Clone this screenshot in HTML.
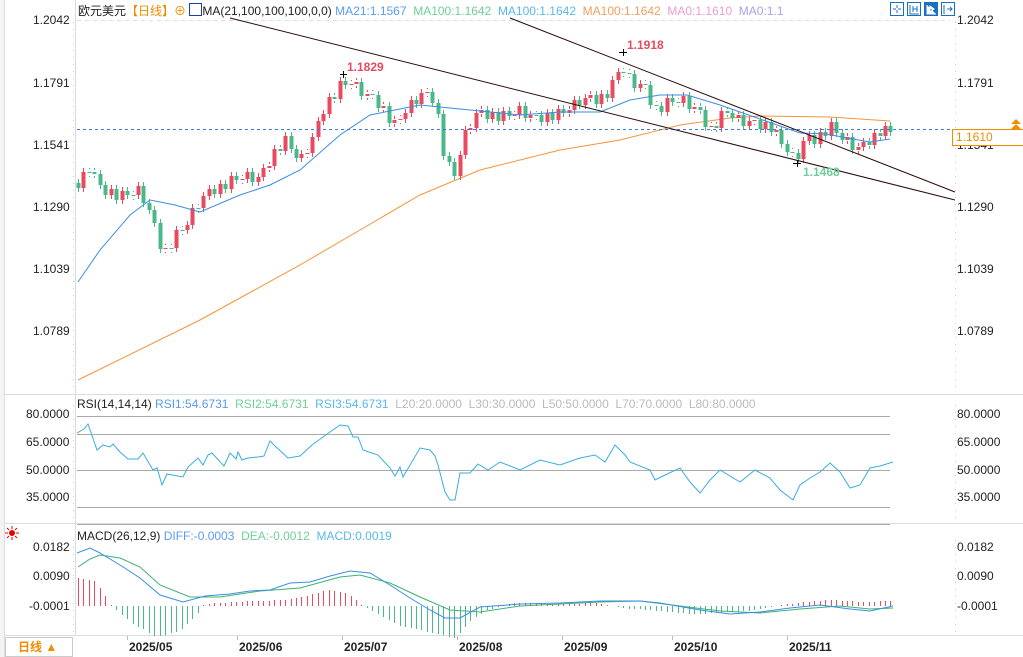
<!DOCTYPE html>
<html><head><meta charset="utf-8">
<style>
body{margin:0;width:1023px;height:657px;overflow:hidden;background:#fff;font-family:"Liberation Sans","Noto Sans CJK SC",sans-serif;position:relative}
.t{position:absolute;font-size:12px;white-space:nowrap;line-height:14px}
.ax{position:absolute;font-size:12px;color:#222;line-height:14px}
svg{position:absolute;left:0;top:0}
</style></head><body>
<svg width="1023" height="657" xmlns="http://www.w3.org/2000/svg" xmlns:xlink="http://www.w3.org/1999/xlink">
<defs>
<path id="rb" d="M83.5 172V188M111.5 189V195M122.5 191V200M138.5 186V195M165.5 248V249M176.5 230V248M187.5 225V230M192.5 208V225M203.5 196V208M209.5 189V196M220.5 184V194M231.5 176V189M242.5 179V180M247.5 172V179M258.5 177V182M263.5 168V177M269.5 166V168M274.5 149V166M285.5 136V151M301.5 154V158M307.5 153V154M312.5 137V153M318.5 121V137M323.5 114V121M329.5 97V114M340.5 81V99M351.5 84V85M356.5 82V84M367.5 94V96M383.5 106V108M394.5 120V123M400.5 119V120M405.5 113V119M411.5 100V113M421.5 93V104M427.5 92V93M460.5 155V176M465.5 130V155M470.5 128V130M476.5 113V128M481.5 110V113M492.5 112V119M503.5 111V121M514.5 115V116M519.5 106V115M530.5 115V118M547.5 113V122M558.5 109V120M569.5 110V113M574.5 100V110M585.5 98V105M590.5 95V98M601.5 94V104M612.5 80V98M618.5 72V80M640.5 84V88M667.5 98V112M683.5 96V103M694.5 107V109M711.5 126V127M721.5 111V128M738.5 115V118M749.5 121V126M754.5 120V121M765.5 122V129M776.5 130V132M803.5 141V159M809.5 135V141M820.5 132V144M831.5 122V136M847.5 137V140M858.5 147V150M863.5 142V147M874.5 133V145M885.5 126V136"/>
<path id="gb" d="M78.5 183V188M89.5 172V173M94.5 172V174M100.5 174V185M105.5 185V195M116.5 189V200M127.5 191V195M133.5 195V196M143.5 186V203M149.5 203V210M154.5 210V223M160.5 223V249M171.5 248V249M182.5 230V231M198.5 208V209M214.5 189V194M225.5 184V189M236.5 176V180M252.5 172V182M280.5 149V151M291.5 136V149M296.5 149V158M334.5 97V99M345.5 81V85M361.5 82V96M372.5 94V95M378.5 95V108M389.5 106V123M416.5 100V104M432.5 92V103M438.5 103V114M443.5 114V156M449.5 156V162M454.5 162V176M487.5 110V119M498.5 112V121M509.5 111V116M525.5 106V118M536.5 115V116M541.5 115V122M552.5 113V120M563.5 109V113M579.5 100V105M596.5 95V104M607.5 94V98M623.5 72V73M629.5 73V74M634.5 74V88M645.5 84V85M650.5 85V105M656.5 105V106M661.5 106V112M672.5 98V102M678.5 102V103M689.5 96V109M700.5 107V110M705.5 110V127M716.5 126V128M727.5 111V113M732.5 113V118M743.5 115V126M760.5 120V129M771.5 122V132M781.5 130V144M787.5 144V152M792.5 152V153M798.5 153V159M814.5 135V144M825.5 132V136M836.5 122V133M842.5 133V140M852.5 137V150M869.5 142V145M880.5 133V136M890.5 126V132"/>
</defs>
<rect x="0" y="0" width="4" height="657" fill="#f3f3f3"/>
<line x1="4.5" y1="0" x2="4.5" y2="657" stroke="#d8dde3"/>
<line x1="75.5" y1="0" x2="75.5" y2="635" stroke="#d8dde3"/>
<line x1="4" y1="394.5" x2="1023" y2="394.5" stroke="#d8dde3"/>
<line x1="4" y1="523.5" x2="1023" y2="523.5" stroke="#d8dde3"/>
<line x1="4" y1="635.5" x2="1023" y2="635.5" stroke="#d8dde3"/>
<line x1="77" y1="20.5" x2="950" y2="20.5" stroke="#ddd" stroke-dasharray="4,4"/>
<g stroke="#ccc" stroke-dasharray="1,6"><line x1="955.5" y1="22" x2="955.5" y2="390"/><line x1="955.5" y1="405" x2="955.5" y2="520"/><line x1="955.5" y1="540" x2="955.5" y2="632"/><line x1="73.5" y1="22" x2="73.5" y2="390"/><line x1="73.5" y1="405" x2="73.5" y2="520"/><line x1="73.5" y1="540" x2="73.5" y2="632"/></g>
<g stroke="#aaa"><line x1="77" y1="416.5" x2="890" y2="416.5"/><line x1="77" y1="434.5" x2="890" y2="434.5"/><line x1="77" y1="470.5" x2="890" y2="470.5"/><line x1="77" y1="507.5" x2="890" y2="507.5"/><line x1="77" y1="524.5" x2="890" y2="524.5"/></g>
<g stroke="#bbb"><line x1="127.5" y1="636" x2="127.5" y2="640"/><line x1="237.5" y1="636" x2="237.5" y2="640"/><line x1="342.5" y1="636" x2="342.5" y2="640"/><line x1="457.5" y1="636" x2="457.5" y2="640"/><line x1="562.5" y1="636" x2="562.5" y2="640"/><line x1="672.5" y1="636" x2="672.5" y2="640"/><line x1="787.5" y1="636" x2="787.5" y2="640"/></g>
<polyline fill="none" stroke="#f7943a" points="78,380 200,320 300,265 360,230 420,195 480,170 560,150 620,140 680,125 730,118 760,116 830,117 890,121"/>
<g stroke="#e84a5f" fill="none"><use xlink:href="#rb" href="#rb" stroke-width="1" transform="translate(0,-4)"/><use xlink:href="#rb" href="#rb" stroke-width="1" transform="translate(0,4)"/><use xlink:href="#rb" href="#rb" stroke-width="4"/></g>
<g stroke="#4ab88a" fill="none"><use xlink:href="#gb" href="#gb" stroke-width="1" transform="translate(0,-4)"/><use xlink:href="#gb" href="#gb" stroke-width="1" transform="translate(0,4)"/><use xlink:href="#gb" href="#gb" stroke-width="4"/></g>
<polyline fill="none" stroke="#3a8ee6" points="78,282 100,250 130,215 150,200 175,205 200,212 240,195 270,185 300,170 340,135 370,115 420,105 470,110 520,115 560,112 600,112 630,100 660,95 687,95 720,105 760,119 800,133 827,134 847,138 870,142 890,139"/>
<line x1="77" y1="129.5" x2="950" y2="129.5" stroke="#3a7bd5" stroke-dasharray="3,3"/>
<line x1="230" y1="18" x2="955" y2="200" stroke="#2a0a0a"/>
<line x1="510" y1="18" x2="955" y2="192" stroke="#2a0a0a"/>
<g stroke="#000"><line x1="340" y1="74.5" x2="347" y2="74.5"/><line x1="343.5" y1="71" x2="343.5" y2="78"/><line x1="619" y1="52.5" x2="627" y2="52.5"/><line x1="623.5" y1="49" x2="623.5" y2="56"/><line x1="793" y1="163.5" x2="801" y2="163.5"/><line x1="797.5" y1="160" x2="797.5" y2="167"/></g>
<polyline fill="none" stroke="#3aaee0" points="77,433 84,429 88,424 97,450 103,445 110,447 113,444 120,452 128,459 138,459 143,453 153,470 157,468 162,485 167,474 183,477 188,467 198,458 203,465 208,455 212,453 224,466 230,453 236,459 238,452 242,460 248,458 258,457 264,456 270,441 276,447 288,458 300,456 312,445 330,432 340,425 348,426 353,437 358,437 363,450 378,455 390,468 395,476 400,467 403,477 420,448 430,450 435,456 438,465 445,492 450,500 455,500 460,473 470,473 478,464 488,470 500,462 520,470 540,460 560,465 580,458 595,455 605,462 615,445 625,455 630,462 650,470 655,480 665,475 680,468 690,482 700,493 710,480 720,470 740,482 755,470 770,478 780,490 793,500 800,485 810,478 820,472 830,463 840,472 850,488 860,485 870,468 880,466 893,462"/>
<path stroke="#e84a5f" d="M78.5 606v-28M83.5 606v-27M89.5 606v-26M94.5 606v-25M100.5 606v-18M105.5 606v-10M111.5 606v-1M203.5 606v-1M209.5 606v-2M214.5 606v-3M220.5 606v-3M225.5 606v-3M231.5 606v-4M236.5 606v-4M242.5 606v-4M247.5 606v-5M252.5 606v-5M258.5 606v-5M263.5 606v-5M269.5 606v-5M274.5 606v-6M280.5 606v-6M285.5 606v-6M291.5 606v-7M296.5 606v-8M301.5 606v-9M307.5 606v-10M312.5 606v-12M318.5 606v-13M323.5 606v-15M329.5 606v-16M334.5 606v-15M340.5 606v-14M345.5 606v-13M351.5 606v-10M356.5 606v-6M361.5 606v-1M503.5 606v-1M509.5 606v-2M514.5 606v-3M519.5 606v-3M525.5 606v-3M530.5 606v-3M536.5 606v-3M541.5 606v-3M547.5 606v-2M552.5 606v-2M558.5 606v-2M563.5 606v-2M569.5 606v-2M574.5 606v-2M579.5 606v-2M585.5 606v-3M590.5 606v-3M596.5 606v-3M601.5 606v-2M607.5 606v-1M781.5 606v-1M787.5 606v-2M792.5 606v-2M798.5 606v-3M803.5 606v-4M809.5 606v-4M814.5 606v-5M820.5 606v-5M825.5 606v-6M831.5 606v-6M836.5 606v-6M842.5 606v-5M847.5 606v-5M852.5 606v-5M858.5 606v-4M863.5 606v-4M869.5 606v-4M874.5 606v-4M880.5 606v-5M885.5 606v-5M890.5 606v-5"/>
<path stroke="#4ab88a" d="M116.5 606v4M122.5 606v9M127.5 606v13M133.5 606v18M138.5 606v21M143.5 606v23M149.5 606v27M154.5 606v30M160.5 606v30M165.5 606v29M171.5 606v27M176.5 606v26M182.5 606v23M187.5 606v18M192.5 606v13M198.5 606v7M367.5 606v2M372.5 606v5M378.5 606v8M383.5 606v11M389.5 606v14M394.5 606v17M400.5 606v20M405.5 606v21M411.5 606v22M416.5 606v23M421.5 606v24M427.5 606v26M432.5 606v27M438.5 606v28M443.5 606v29M449.5 606v31M454.5 606v32M460.5 606v27M465.5 606v21M470.5 606v15M476.5 606v11M481.5 606v8M487.5 606v4M492.5 606v3M498.5 606v1M618.5 606v1M623.5 606v2M629.5 606v3M634.5 606v3M640.5 606v3M645.5 606v4M650.5 606v4M656.5 606v5M661.5 606v5M667.5 606v6M672.5 606v6M678.5 606v7M683.5 606v7M689.5 606v8M694.5 606v8M700.5 606v8M705.5 606v8M711.5 606v7M716.5 606v7M721.5 606v7M727.5 606v6M732.5 606v6M738.5 606v6M743.5 606v5M749.5 606v5M754.5 606v4M760.5 606v3M765.5 606v2M771.5 606v1"/>
<polyline fill="none" stroke="#3cb371" points="78,567 90,559 100,555 120,558 140,567 160,585 190,597 220,597 260,591 300,588 340,577 360,575 390,583 420,597 450,610 480,612 520,606 560,604 600,602 640,601 680,606 720,611 760,613 800,609 840,606 870,609 893,608"/>
<polyline fill="none" stroke="#3a8ee6" points="77,553 90,548 100,553 120,565 140,578 160,595 183,602 205,596 230,594 250,591 270,590 290,583 310,582 330,576 350,571 370,573 390,585 410,598 430,610 445,618 460,618 480,607 520,604 560,603 600,601 640,601 660,603 700,610 730,614 760,612 790,608 820,605 850,609 870,611 893,606"/>
<path d="M1011 124 L1016 119 L1021 124Z M1011 129 L1016 124 L1021 129Z" fill="#f08c00"/>
<g fill="#fff" stroke="#1a6fc0"><rect x="890.5" y="2.5" width="13" height="13"/><rect x="907.5" y="2.5" width="13" height="13"/><rect x="924.5" y="2.5" width="13" height="13" fill="#1a6fc0"/><rect x="941.5" y="2.5" width="13" height="13"/></g>
<g stroke="#1a6fc0" fill="none"><path d="M897 5v3M897 10v3M893 9h3M898 9h3"/><path d="M910 5v9h9M913 6v6M917 6v6M913 9h4"/><path d="M944 5v9M947 9h5M950 7l2 2-2 2"/></g>
<path d="M927 5v9h9M930 6l4 3-4 3z" stroke="#fff" fill="#fff"/>
<rect x="5.5" y="637.5" width="67" height="19" fill="#fff" stroke="#ccc"/>
<circle cx="12" cy="533" r="3" fill="#e00"/><g stroke="#e00"><path d="M12 526v3M12 537v3M5 533h3M16 533h3M7 528l2 2M15 536l2 2M7 538l2-2M15 530l2-2"/></g>
</svg>
<div class="t" style="left:78px;top:3px;color:#222">欧元美元<span style="color:#f08c00">【日线】⊕</span> <span style="display:inline-block;width:11px;height:11px;border:1px solid #1a3fa0;vertical-align:-1px"></span>MA(21,100,100,100,0,0) <span style="color:#5a9cf0">MA21:1.1567</span>&nbsp; <span style="color:#6fcf9a">MA100:1.1642</span>&nbsp; <span style="color:#5ab8f0">MA100:1.1642</span>&nbsp; <span style="color:#f0a060">MA100:1.1642</span>&nbsp; <span style="color:#e8a0d0">MA0:1.1610</span>&nbsp; <span style="color:#b0a0e8">MA0:1.1</span></div>
<div class="ax" style="left:33px;top:13px">1.2042</div>
<div class="ax" style="left:33px;top:76px">1.1791</div>
<div class="ax" style="left:33px;top:138px">1.1541</div>
<div class="ax" style="left:33px;top:200px">1.1290</div>
<div class="ax" style="left:33px;top:262px">1.1039</div>
<div class="ax" style="left:33px;top:324px">1.0789</div>
<div class="ax" style="left:957px;top:13px">1.2042</div>
<div class="ax" style="left:957px;top:76px">1.1791</div>
<div class="ax" style="left:957px;top:138px">1.1541</div>
<div class="ax" style="left:957px;top:200px">1.1290</div>
<div class="ax" style="left:957px;top:262px">1.1039</div>
<div class="ax" style="left:957px;top:324px">1.0789</div>
<div style="position:absolute;left:952px;top:129px;width:67px;height:15px;border:1px solid #f08c00;background:#fff;color:#f08c00;font-size:12px;line-height:15px;padding-left:3px;box-sizing:content-box">1.1610</div>
<div class="t" style="left:347px;top:60px;color:#e84a5f;font-weight:bold">1.1829</div>
<div class="t" style="left:627px;top:38px;color:#e84a5f;font-weight:bold">1.1918</div>
<div class="t" style="left:803px;top:165px;color:#6fcf9a;font-weight:bold">1.1468</div>
<div class="t" style="left:77px;top:397px;color:#222">RSI(14,14,14) <span style="color:#5a9cf0">RSI1:54.6731</span>&nbsp; <span style="color:#6fcf9a">RSI2:54.6731</span>&nbsp; <span style="color:#5ab8f0">RSI3:54.6731</span>&nbsp; <span style="color:#bbb">L20:20.0000&nbsp; L30:30.0000&nbsp; L50:50.0000&nbsp; L70:70.0000&nbsp; L80:80.0000</span></div>
<div class="ax" style="left:26px;top:407px">80.0000</div>
<div class="ax" style="left:26px;top:435px">65.0000</div>
<div class="ax" style="left:26px;top:463px">50.0000</div>
<div class="ax" style="left:26px;top:490px">35.0000</div>
<div class="ax" style="left:957px;top:407px">80.0000</div>
<div class="ax" style="left:957px;top:435px">65.0000</div>
<div class="ax" style="left:957px;top:463px">50.0000</div>
<div class="ax" style="left:957px;top:490px">35.0000</div>
<div class="t" style="left:77px;top:529px;color:#222">MACD(26,12,9) <span style="color:#5a9cf0">DIFF:-0.0003</span>&nbsp; <span style="color:#6fcf9a">DEA:-0.0012</span>&nbsp; <span style="color:#5ab8f0">MACD:0.0019</span></div>
<div class="ax" style="left:33px;top:540px">0.0182</div>
<div class="ax" style="left:33px;top:569px">0.0090</div>
<div class="ax" style="left:29px;top:599px">-0.0001</div>
<div class="ax" style="left:957px;top:540px">0.0182</div>
<div class="ax" style="left:957px;top:569px">0.0090</div>
<div class="ax" style="left:957px;top:599px">-0.0001</div>
<div class="t" style="left:18px;top:640px;color:#f08c00;font-weight:bold">日线 ▲</div>
<div class="t" style="left:129px;top:640px;font-weight:bold;color:#222">2025/05</div>
<div class="t" style="left:239px;top:640px;font-weight:bold;color:#222">2025/06</div>
<div class="t" style="left:344px;top:640px;font-weight:bold;color:#222">2025/07</div>
<div class="t" style="left:459px;top:640px;font-weight:bold;color:#222">2025/08</div>
<div class="t" style="left:564px;top:640px;font-weight:bold;color:#222">2025/09</div>
<div class="t" style="left:674px;top:640px;font-weight:bold;color:#222">2025/10</div>
<div class="t" style="left:789px;top:640px;font-weight:bold;color:#222">2025/11</div>
</body></html>
